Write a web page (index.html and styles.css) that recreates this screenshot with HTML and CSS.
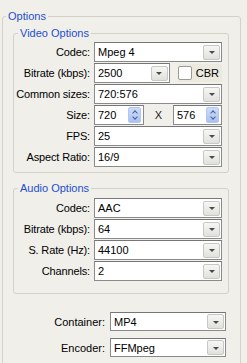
FILE: index.html
```html
<!DOCTYPE html>
<html>
<head>
<meta charset="utf-8">
<link rel="stylesheet" href="styles.css">
</head>
<body>
<fieldset class="group outer">
  <legend class="legend outer-legend">Options</legend>

  <fieldset class="group sub video">
    <legend class="legend">Video Options</legend>
    <div class="row">
      <span class="lbl">Codec:</span>
      <div class="combo full"><span class="val">Mpeg 4</span><span class="btn"><i class="tri"></i></span></div>
    </div>
    <div class="row">
      <span class="lbl">Bitrate (kbps):</span>
      <div class="combo short"><span class="val">2500</span><span class="btn"><i class="tri"></i></span></div>
      <div class="check"><span class="box"></span><span class="ctext">CBR</span></div>
    </div>
    <div class="row">
      <span class="lbl">Common sizes:</span>
      <div class="combo full"><span class="val">720:576</span><span class="btn"><i class="tri"></i></span></div>
    </div>
    <div class="row">
      <span class="lbl">Size:</span>
      <div class="spin"><span class="val">720</span><span class="sbtn"><i class="up"></i><i class="dn"></i></span></div>
      <span class="xsep">X</span>
      <div class="spin"><span class="val">576</span><span class="sbtn"><i class="up"></i><i class="dn"></i></span></div>
    </div>
    <div class="row">
      <span class="lbl">FPS:</span>
      <div class="combo full"><span class="val">25</span><span class="btn"><i class="tri"></i></span></div>
    </div>
    <div class="row">
      <span class="lbl">Aspect Ratio:</span>
      <div class="combo full"><span class="val">16/9</span><span class="btn"><i class="tri"></i></span></div>
    </div>
  </fieldset>

  <fieldset class="group sub audio">
    <legend class="legend">Audio Options</legend>
    <div class="row">
      <span class="lbl">Codec:</span>
      <div class="combo full"><span class="val">AAC</span><span class="btn"><i class="tri"></i></span></div>
    </div>
    <div class="row">
      <span class="lbl">Bitrate (kbps):</span>
      <div class="combo full"><span class="val">64</span><span class="btn"><i class="tri"></i></span></div>
    </div>
    <div class="row">
      <span class="lbl">S. Rate (Hz):</span>
      <div class="combo full"><span class="val">44100</span><span class="btn"><i class="tri"></i></span></div>
    </div>
    <div class="row">
      <span class="lbl">Channels:</span>
      <div class="combo full"><span class="val">2</span><span class="btn"><i class="tri"></i></span></div>
    </div>
  </fieldset>

  <div class="bottom">
    <div class="brow">
      <span class="blbl">Container:</span>
      <div class="combo bcombo"><span class="val">MP4</span><span class="btn"><i class="tri"></i></span></div>
    </div>
    <div class="brow">
      <span class="blbl">Encoder:</span>
      <div class="combo bcombo"><span class="val">FFMpeg</span><span class="btn"><i class="tri"></i></span></div>
    </div>
  </div>
</fieldset>
</body>
</html>
```

FILE: styles.css
```css
html, body {
  margin: 0;
  padding: 0;
  background: #f0efea;
  overflow: hidden;
  height: 363px;
}
body {
  padding-top: 9px;
  box-sizing: border-box;
  font-family: "Liberation Sans", Arial, sans-serif;
  font-size: 11px;
  color: #000;
}
.group {
  border: 1px solid #d3d2c6;
  border-radius: 3px;
  margin: 0;
  min-width: 0;
}
.legend {
  font-size: 11px;
  line-height: 14px;
  height: 14px;
  color: #1f4ed0;
  padding: 0 2px;
  margin-left: 0;
}
.outer {
  margin-left: 2px;
  width: 239px;
  box-sizing: border-box;
  padding: 3px 11px 20px 10px;
}
.outer-legend {
  margin-left: -7px;
}
.sub {
  padding: 2px 6px 5px 4px;
}
.video .row + .row, .audio .row + .row { margin-top: 1px; }
.audio {
  margin-top: 8px;
  padding-top: 3px;
  padding-bottom: 12px;
}
.row {
  display: flex;
  align-items: center;
  height: 20px;
}
.lbl {
  width: 72px;
  flex: none;
  text-align: right;
  white-space: nowrap;
  margin-right: 4px;
  display: flex;
  justify-content: flex-end;
  letter-spacing: -0.15px;
}
.combo, .spin {
  height: 20px;
  box-sizing: border-box;
  border: 1px solid #8a8a8a;
  border-top-color: #767676;
  background: #fff;
  display: flex;
  align-items: center;
  position: relative;
}
.full { width: 128px; }
.short { width: 80px; }
.val {
  flex: 1;
  padding-left: 3px;
  white-space: nowrap;
  line-height: 14px;
}
.btn {
  width: 17px;
  height: 15px;
  margin-right: 1px;
  box-sizing: border-box;
  border: 1px solid #c7c7c4;
  border-radius: 2px;
  background: linear-gradient(#f6f6f4, #e1e1dc);
  display: flex;
  align-items: center;
  justify-content: center;
}
.tri {
  width: 0;
  height: 0;
  border-left: 3px solid transparent;
  border-right: 3px solid transparent;
  border-top: 3px solid #4a4a4a;
  margin-top: 1px;
}
.check {
  display: flex;
  align-items: center;
  margin-left: 8px;
  background: #eceadf;
  height: 18px;
  padding-right: 3px;
}
.box {
  width: 14px;
  height: 14px;
  box-sizing: border-box;
  border: 1px solid #9a9a96;
  border-radius: 2px;
  background: #fff;
  margin-right: 4px;
}
.ctext { line-height: 14px; }
.spin { width: 50px; }
.spin + .xsep + .spin { width: 49px; }
.sbtn {
  width: 13px;
  height: 16px;
  margin-right: 2px;
  display: flex;
  flex-direction: column;
  border-radius: 2px;
  background: linear-gradient(#cddcfb, #a9c1f3);
  box-sizing: border-box;
  border: 1px solid #b3c6f1;
}
.sbtn i {
  flex: 1;
  display: flex;
  align-items: center;
  justify-content: center;
  position: relative;
}
.sbtn i::before {
  content: "";
  width: 4px;
  height: 4px;
  border-left: 1.5px solid #4d6185;
  border-top: 1.5px solid #4d6185;
  box-sizing: border-box;
}
.sbtn .up::before { transform: rotate(45deg); margin-top: 3px; }
.sbtn .dn::before { transform: rotate(-135deg); margin-top: -3px; }
.xsep {
  width: 29px;
  text-align: center;
  flex: none;
  color: #222;
}
.bottom {
  margin-top: 18px;
  padding-right: 3px;
  display: flex;
  flex-direction: column;
  gap: 7px;
}
.brow {
  display: flex;
  align-items: center;
  height: 19px;
}
.blbl {
  width: 92px;
  text-align: right;
  margin-right: 5px;
  flex: none;
}
.bcombo {
  width: 116px;
  height: 19px;
}
```
